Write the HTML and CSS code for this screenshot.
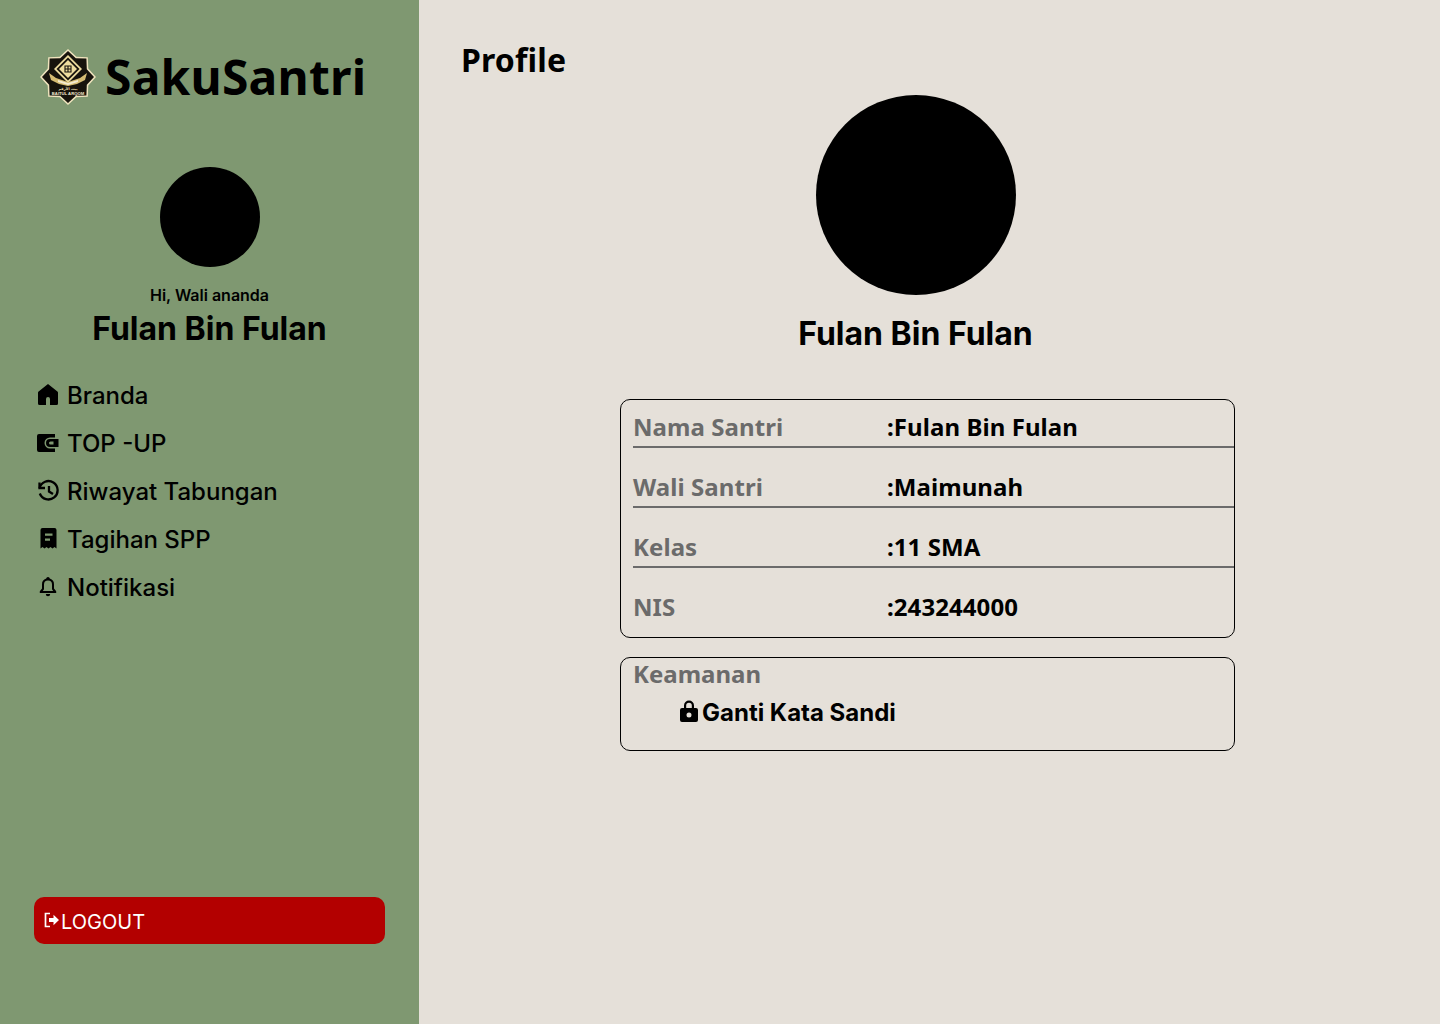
FILE: index.html
```html
<!DOCTYPE html>
<html lang="id">
<head>
<meta charset="utf-8">
<title>SakuSantri - Profile</title>
<link rel="stylesheet" href="styles.css">
</head>
<body>
<div class="app">
  <aside class="sidebar">
    <div class="brand">
      <svg class="logo" viewBox="0 0 56 56" aria-hidden="true">
        <polygon fill="#efe3bd" points="28,0 36.400,7.700 47.800,8.200 48.300,19.600 56,28 48.300,36.400 47.800,47.800 36.400,48.300 28,56 19.600,48.300 8.200,47.800 7.700,36.400 0,28 7.700,19.600 8.200,8.200 19.600,7.700"/>
        <polygon fill="#17130c" points="28,2 35.800,9.200 46.400,9.600 46.800,20.200 54,28 46.800,35.800 46.400,46.400 35.800,46.800 28,54 20.200,46.800 9.600,46.400 9.200,35.800 2,28 9.200,20.200 9.600,9.600 20.200,9.200"/>
        <polygon fill="#eddc9e" points="28,6 42,20 28,34 14,20"/>
        <polygon fill="#17130c" points="28,8.500 39.500,20 28,31.500 16.500,20"/>
        <polygon fill="#eddc9e" points="28,11 37,20 28,29 19,20"/>
        <path fill="none" stroke="#17130c" stroke-width="1.100" d="M24.500 20h7M28 16.500v7M25 17h6v6h-6z"/>
        <path fill="#d6bc72" d="M9 24l7 5 12 4 12-4 7-5-2 7-8 4-9 2-9-2-8-4z"/>
        <path fill="#f3ead0" d="M18 31l10 3 10-3v2l-10 3-10-3z"/>
        <text class="logo-arabic" x="28" y="41" text-anchor="middle">بيت الأرقم</text>
        <text class="logo-text" x="28" y="45.500" text-anchor="middle">BAITUL ARQOM</text>
      </svg>
      <span class="brand-name">SakuSantri</span>
    </div>
    <div class="user">
      <div class="avatar-small"></div>
      <p class="greeting">Hi, Wali ananda</p>
      <p class="user-name">Fulan Bin Fulan</p>
    </div>
    <nav class="menu">
      <a class="menu-item"><svg class="menu-icon" viewBox="0 0 24 24"><path d="M12 1 2.600 8.500a1.500 1.500 0 0 0-.6 1.200V20.500A1.500 1.500 0 0 0 3.500 22H10v-6a2 2 0 0 1 4 0v6h6.500a1.500 1.500 0 0 0 1.500-1.500V9.700a1.500 1.500 0 0 0-.6-1.200z"/></svg>Branda</a>
      <a class="menu-item"><svg class="menu-icon" viewBox="0 0 24 24"><path d="M3 3h16v3.500h-5a5.500 5.500 0 0 0 0 11h5V21H3a2 2 0 0 1-2-2V5a2 2 0 0 1 2-2z"/><path fill-rule="evenodd" d="M14 8h8.500v8H14a4 4 0 0 1 0-8zm.5 2.500a1.500 1.500 0 1 0 0 3h3v-3z"/></svg>TOP -UP</a>
      <a class="menu-item"><svg class="menu-icon icon-line" viewBox="0 0 24 24"><path d="M3.500 3.500V9H9"/><path d="M3.500 9A9.200 9.200 0 1 1 3.800 14.500"/><path d="M13 7v5.500l4 2.500"/></svg>Riwayat Tabungan</a>
      <a class="menu-item"><svg class="menu-icon" viewBox="0 0 24 24"><path fill-rule="evenodd" d="M6 1h12.500a2 2 0 0 1 2 2v18.500l-2-1.500-2 1.500-2-1.500-2 1.500-2-1.500-2 1.500-2-1.500-2 1.500V3a2 2 0 0 1 2-2zm3 5.500v2.200h7.500V6.500zm0 5v2.200h5v-2.200z"/></svg>Tagihan SPP</a>
      <a class="menu-item"><svg class="menu-icon" viewBox="0 0 24 24"><path fill-rule="evenodd" d="M12 2a1.800 1.800 0 0 1 1.800 1.600A6 6 0 0 1 18 9.500v4l2.200 2.800V18H3.800v-1.700L6 13.500v-4a6 6 0 0 1 4.200-5.900A1.800 1.800 0 0 1 12 2zm0 3.500a4 4 0 0 0-4 4v4.800L6.800 16h10.400L16 14.300V9.500a4 4 0 0 0-4-4z"/><path d="M9.800 19h4.400a2.200 2.200 0 0 1-4.400 0z"/></svg>Notifikasi</a>
    </nav>
    <button class="logout" type="button">
      <svg class="logout-icon" viewBox="0 0 16 16"><path d="M6 1.500H1.500v13H6" fill="none" stroke="#fff" stroke-width="1.700"/><path fill="#fff" d="M5 6h4.500V2.800L15 8l-5.500 5.200V10H5z"/></svg>LOGOUT
    </button>
  </aside>
  <main class="content">
    <h1 class="page-title">Profile</h1>
    <section class="profile-head">
      <div class="avatar-large"></div>
      <p class="profile-name">Fulan Bin Fulan</p>
    </section>
    <section class="card info-card">
      <div class="info-row"><span class="info-label">Nama Santri</span><span class="info-value">:Fulan Bin Fulan</span></div>
      <div class="info-row"><span class="info-label">Wali Santri</span><span class="info-value">:Maimunah</span></div>
      <div class="info-row"><span class="info-label">Kelas</span><span class="info-value">:11 SMA</span></div>
      <div class="info-row"><span class="info-label">NIS</span><span class="info-value">:243244000</span></div>
    </section>
    <section class="card security-card">
      <div class="info-label">Keamanan</div>
      <a class="security-link"><svg class="lock-icon" viewBox="0 0 18 22"><path fill-rule="evenodd" d="M4 8V5.500a5 5 0 0 1 10 0V8h2a2 2 0 0 1 2 2v10a2 2 0 0 1-2 2H2a2 2 0 0 1-2-2V10a2 2 0 0 1 2-2zm2.200 0h5.600V5.500a2.800 2.800 0 0 0-5.600 0zM9 12.500a2.500 2.500 0 1 0 0 5 2.500 2.500 0 0 0 0-5z"/></svg>Ganti Kata Sandi</a>
    </section>
  </main>
</div>
</body>
</html>
```
FILE: styles.css
```css
* { box-sizing: border-box; }
html, body { margin: 0; padding: 0; }
body { font-family: "Inter", sans-serif; color: #000; background: #e5e0d9; }
p, h1 { margin: 0; }

.app { display: flex; height: 1024px; overflow: hidden; }

.sidebar {
  width: 419px;
  flex: none;
  background: #7f9871;
  display: flex;
  flex-direction: column;
  padding: 48px 34px 80px;
}
.brand { display: flex; align-items: center; gap: 9px; height: 57px; padding-left: 6px; }
.logo { width: 56px; height: 56px; flex: none; }
.logo-text {
  font-family: "Liberation Sans", sans-serif;
  font-size: 4.2px;
  font-weight: 700;
  fill: #f3ead0;
}
.logo-arabic {
  font-family: "DejaVu Sans", sans-serif;
  font-size: 3.6px;
  font-weight: 700;
  fill: #e4d6a6;
}
.brand-name {
  font-family: "Noto Sans", sans-serif;
  font-weight: 700;
  font-size: 48px;
  line-height: 57px;
  letter-spacing: 0.2px;
  white-space: nowrap;
}

.user { display: flex; flex-direction: column; align-items: center; margin-top: 62px; }
.avatar-small { width: 100px; height: 100px; border-radius: 50%; background: #000; }
.greeting { font-size: 16px; font-weight: 600; line-height: 18px; margin-top: 19px; }
.user-name { font-size: 32px; font-weight: 700; line-height: 39px; margin-top: 5px; }

.menu { display: flex; flex-direction: column; gap: 8px; margin-top: 27px; }
.menu-item {
  display: flex;
  align-items: center;
  gap: 7px;
  height: 40px;
  padding-left: 2px;
  font-size: 24px;
  font-weight: 500;
  color: #000;
}
.menu-icon { width: 24px; height: 24px; flex: none; fill: #000; }
.icon-line { fill: none; stroke: #000; stroke-width: 2.300; }

.logout {
  margin-top: auto;
  height: 47px;
  width: 351px;
  display: flex;
  align-items: center;
  padding: 2px 9px 0;
  border: 0;
  border-radius: 10px;
  background: #b30000;
  color: #fff;
  font-family: "Inter", sans-serif;
  font-size: 20px;
  line-height: 24px;
}
.logout-icon { width: 18px; height: 16px; flex: none; margin-top: -4px; }

.content { flex: 1; padding: 38px 0 0 42px; }
.page-title {
  font-family: "Noto Sans", sans-serif;
  font-size: 32px;
  font-weight: 700;
  line-height: 44px;
  letter-spacing: 0.15px;
}
.profile-head { display: flex; flex-direction: column; align-items: center; width: 909px; margin-top: 13px; }
.avatar-large { width: 200px; height: 200px; border-radius: 50%; background: #000; }
.profile-name { font-size: 32px; font-weight: 700; line-height: 39px; margin-top: 19px; }

.card { width: 615px; margin-left: 159px; border: 1px solid #000; border-radius: 10px; }
.info-card { margin-top: 46px; height: 239px; padding: 8px 0 0 12px; }
.info-row {
  display: flex;
  align-items: flex-end;
  height: 60px;
  padding-bottom: 3px;
  border-bottom: 2px solid #6b6b6b;
  font-family: "Noto Sans", sans-serif;
  font-size: 24px;
  font-weight: 700;
  line-height: 33px;
  letter-spacing: 0.07px;
}
.info-row:first-child { height: 40px; }
.info-row:last-child { border-bottom: 0; height: 58px; }
.info-label {
  font-family: "Noto Sans", sans-serif;
  font-size: 24px;
  font-weight: 700;
  line-height: 31px;
  color: #6b6b6b;
}
.info-row .info-label { width: 254px; flex: none; line-height: 33px; }
.info-value { color: #000; }

.security-card { margin-top: 19px; height: 94px; padding: 0 12px; }
.security-link {
  display: flex;
  align-items: center;
  gap: 4px;
  margin: 9px 0 0 47px;
  font-size: 24px;
  font-weight: 700;
  line-height: 29px;
}
.lock-icon { width: 18px; height: 22px; flex: none; margin-top: -4px; fill: #000; }
```
